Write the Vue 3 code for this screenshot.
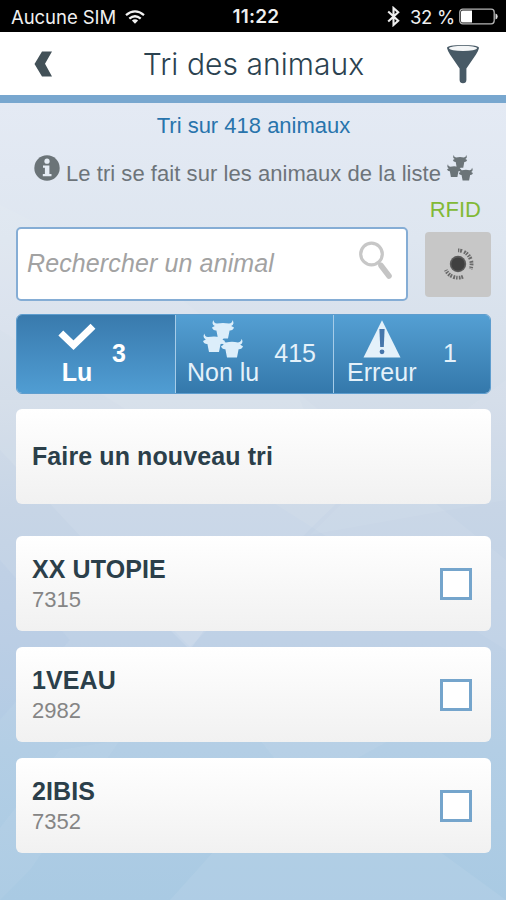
<script setup>
import { ref } from 'vue'

const query = ref('')
const active = ref('lu')
const tabs = [
  { id: 'lu', label: 'Lu', count: 3 },
  { id: 'nonlu', label: 'Non lu', count: 415 },
  { id: 'erreur', label: 'Erreur', count: 1 }
]
const animals = ref([
  { name: 'XX UTOPIE', number: '7315', checked: false },
  { name: '1VEAU', number: '2982', checked: false },
  { name: '2IBIS', number: '7352', checked: false }
])
</script>

<template>
  <div class="screen">
    <svg class="backdrop" viewBox="0 0 506 900" aria-hidden="true">
      <g fill="#fff">
        <path d="M0 205 L170 290 L506 560 V650 L0 330Z" opacity=".06" />
        <path d="M0 450 L80 536 L190 647 L340 500 L300 400 L0 400Z" opacity=".08" />
        <path d="M165 625 L190 650 L215 615Z" opacity=".12" />
        <path d="M310 535 L345 500 L506 380 V500Z" opacity=".05" />
        <path d="M260 740 L300 790 L390 740Z" opacity=".06" />
        <path d="M0 828 L60 750 L120 740 L30 870 L0 900Z" opacity=".05" />
        <path d="M170 900 L260 800 L410 830 L506 900Z" opacity=".07" />
      </g>
      <path d="M0 560 L70 640 L0 720Z" fill="#9fb6e0" opacity=".1" />
    </svg>

    <div class="statusbar">
      <div class="carrier">
        <span>Aucune SIM</span>
        <svg width="20" height="14" viewBox="0 0 20 14">
          <g fill="none" stroke="#f2f2f2" stroke-width="2.3">
            <path d="M1 5.2 Q10 -2.4 19 5.2" />
            <path d="M4.3 8.6 Q10 3.8 15.7 8.6" />
          </g>
          <path d="M10 13.8 L6.9 10.6 Q10 7.9 13.1 10.6Z" fill="#f2f2f2" />
        </svg>
      </div>
      <span class="clock">11:22</span>
      <div class="power">
        <svg width="13" height="21" viewBox="0 0 13 21">
          <path d="M1.2 5.6 L11.2 14.8 L6.5 19 V2 L11.2 6.2 L1.2 15.4" fill="none" stroke="#eee" stroke-width="2.1" />
        </svg>
        <span class="percent">32 %</span>
        <svg width="39" height="17" viewBox="0 0 39 17">
          <rect x=".8" y="1.2" width="34.4" height="14.6" rx="3" fill="none" stroke="#b5b5b5" stroke-width="1.3" />
          <path d="M3.5 2.5 H13 V14.5 H3.5 Q2 14.5 2 13 V4 Q2 2.5 3.5 2.5Z" fill="#fff" />
          <path d="M36.5 5.5 Q38.7 6.2 38.7 8.5 Q38.7 10.8 36.5 11.5Z" fill="#ddd" />
        </svg>
      </div>
    </div>

    <header class="header">
      <button class="icon-btn back" aria-label="Retour">
        <svg width="19" height="26" viewBox="0 0 19 26">
          <path d="M8 .5 H18 L11 12.8 L18 25.5 H8 L.5 13Z" fill="#435158" />
        </svg>
      </button>
      <h1>Tri des animaux</h1>
      <button class="icon-btn filter" aria-label="Filtrer">
        <svg width="34" height="40" viewBox="0 0 34 40">
          <path d="M1 4 Q1 1 17 1 Q33 1 33 4 Q32.5 6.5 30 10.5 L20.4 24.5 V36 Q20.2 39.3 17 39.3 Q13.8 39.3 13.6 36 V24.5 L4 10.5 Q1.5 6.5 1 4Z" fill="#485a66" />
          <ellipse cx="17" cy="4.3" rx="14" ry="2.6" fill="#f4f6f7" />
        </svg>
      </button>
    </header>

    <main class="content">
      <p class="summary">Tri sur 418 animaux</p>
      <p class="hint">
        <svg class="info" width="26" height="26" viewBox="0 0 26 26">
          <circle cx="13" cy="13" r="12.7" fill="#6b7478" />
          <circle cx="13" cy="6.2" r="2.6" fill="#e5ecf4" />
          <path d="M9 10.5 H15.4 V19 H17.5 V21.3 H8.8 V19 H10.9 V12.7 H9Z" fill="#e5ecf4" />
        </svg>
        <span>Le tri se fait sur les animaux de la liste</span>
        <svg class="herd" width="26" height="26" viewBox="0 0 40 38" preserveAspectRatio="none">
          <g fill="#6b7478">
            <path id="cow" d="M10.5 0 Q10.5 3 14 3.6 Q20 2.2 26 3.6 Q29.5 3 29.5 0 Q32 4 28.2 6 L31 7.4 Q30 10.6 26.6 10.4 L25 18.6 H15 L13.4 10.4 Q10 10.6 9 7.4 L11.8 6 Q8 4 10.5 0Z" />
            <use href="#cow" x="-9" y="13.5" />
            <use href="#cow" x="9" y="18.8" />
          </g>
        </svg>
      </p>
      <p class="rfid">RFID</p>

      <div class="search-row">
        <label class="search">
          <input v-model="query" type="text" placeholder="Rechercher un animal" />
          <svg width="34" height="40" viewBox="0 0 34 40">
            <circle cx="12.5" cy="13" r="10.8" fill="none" stroke="#c7c7c7" stroke-width="3.2" />
            <path d="M19.3 21.3 L22 24.2" stroke="#c7c7c7" stroke-width="3" />
            <path d="M22 24.5 L30 35" stroke="#c4c4c4" stroke-width="5.6" stroke-linecap="round" />
          </svg>
        </label>
        <button class="reader" aria-label="Lecteur RFID">
          <svg width="36" height="36" viewBox="0 0 36 36">
            <circle cx="18" cy="18" r="8.2" fill="#5b5b5b" />
            <circle cx="18" cy="18" r="6.6" fill="#404040" />
            <g fill="none" stroke="#6a6a6a" stroke-width="3.8">
              <path d="M18 4.4 A13.6 13.6 0 0 1 30.6 23" stroke-dasharray="1.4 .8 2 2 1.8 .8 1.6 1.4" />
              <path d="M23 30.8 A13.6 13.6 0 0 1 5.8 24" stroke-dasharray="1.8 .8 1.7 1.2 1.5 1 1.9 1.3" />
            </g>
          </svg>
        </button>
      </div>

      <nav class="tabs">
        <button v-for="tab in tabs" :key="tab.id" class="tab" :class="[tab.id, { active: active === tab.id }]" @click="active = tab.id">
          <span class="tab-main">
            <svg v-if="tab.id === 'lu'" width="38" height="38" viewBox="0 0 38 38">
              <path d="M2.8 13 L15.5 25.2 L35 6.2" fill="none" stroke="#fff" stroke-width="7" />
            </svg>
            <svg v-else-if="tab.id === 'nonlu'" width="40" height="38" viewBox="0 0 40 38">
              <g fill="#dceefa">
                <path id="bull" d="M10.5 0 Q10.5 3 14 3.6 Q20 2.2 26 3.6 Q29.5 3 29.5 0 Q32 4 28.2 6 L31 7.4 Q30 10.6 26.6 10.4 L25 18.6 H15 L13.4 10.4 Q10 10.6 9 7.4 L11.8 6 Q8 4 10.5 0Z" />
                <use href="#bull" x="-9" y="13.5" />
                <use href="#bull" x="9" y="18.8" />
              </g>
            </svg>
            <svg v-else width="38" height="38" viewBox="0 0 38 38">
              <path d="M19 .3 L37.5 37.5 H.5Z" fill="#e4f1fa" />
              <path d="M16.4 9 H21.6 L20.8 27 H17.2Z" fill="#4676ab" />
              <circle cx="19" cy="31.8" r="2.4" fill="#4676ab" />
            </svg>
            <span class="tab-label">{{ tab.label }}</span>
          </span>
          <span class="tab-count">{{ tab.count }}</span>
        </button>
      </nav>

      <button class="card restart">Faire un nouveau tri</button>

      <ul class="list">
        <li v-for="animal in animals" :key="animal.number" class="card">
          <div class="identity">
            <strong>{{ animal.name }}</strong>
            <span>{{ animal.number }}</span>
          </div>
          <input v-model="animal.checked" type="checkbox" class="check" :aria-label="animal.name" />
        </li>
      </ul>
    </main>
  </div>
</template>

<style>
body { margin: 0; }
</style>

<style scoped>
* { box-sizing: border-box; }
.screen {
  position: relative;
  width: 506px;
  height: 900px;
  overflow: hidden;
  font-family: "Liberation Sans", Arial, sans-serif;
  background: linear-gradient(180deg, #e4eaf4 103px, #dee6f0 240px, #d3dde9 400px, #c7d5e6 510px, #bfd1e6 640px, #b3cee5 750px, #a9cae3 900px);
}
.backdrop { position: absolute; left: 0; top: 0; width: 506px; height: 900px; }
.statusbar, .header, .content { position: relative; }
button { border: 0; padding: 0; margin: 0; font: inherit; background: none; }
p, h1, ul { margin: 0; padding: 0; }
svg { display: block; flex: none; }

.statusbar {
  display: grid;
  grid-template-columns: 1fr auto 1fr;
  align-items: center;
  height: 32px;
  padding: 1px 8px 0 11px;
  background: #000;
  color: #f0f0f0;
  font: 400 18.5px/30px Inter, sans-serif;
}
.carrier { display: flex; align-items: center; gap: 9px; }
.carrier span { letter-spacing: -.05px; }
.clock { font-weight: 600; font-size: 19px; padding-left: 3px; letter-spacing: .2px; }
.power { display: flex; align-items: center; justify-content: flex-end; }
.percent { margin: 0 4px 0 10px; white-space: nowrap; letter-spacing: -.25px; }

.header {
  display: flex;
  align-items: center;
  justify-content: space-between;
  height: 71px;
  padding: 0 26px 0 34px;
  background: #fff;
  border-bottom: 8px solid #78a7cf;
}
.header h1 { font: 350 30px/40px Inter, sans-serif; letter-spacing: .05px; color: #2b4250; padding-left: 8px; }

.content { padding: 0 15px 0 16px; }
.summary { padding: 10px 0 0; font-size: 22px; line-height: 26px; text-align: center; color: #2874ac; }
.hint { display: flex; align-items: flex-start; height: 48px; padding: 16px 0 0 18px; font-size: 22px; line-height: 26px; color: #6d747a; white-space: nowrap; }
.hint span { margin: 6px 6px 0 6px; letter-spacing: .05px; }
.rfid { padding: 10px 10px 0 0; font-size: 22px; line-height: 26px; text-align: right; color: #82b936; }

.search-row { display: flex; align-items: center; justify-content: space-between; height: 74px; margin-top: 4px; }
.search { display: flex; align-items: center; width: 392px; height: 74px; padding: 0 13px 6px 9px; border: 2px solid #85add5; border-radius: 5px; background: #fff; }
.search input { flex: 1; min-width: 0; height: 40px; margin-top: 5px; border: 0; padding: 0; outline: 0; background: none; font: italic 25px/30px "Liberation Sans", Arial, sans-serif; letter-spacing: .12px; color: #333; }
.search input::placeholder { color: #a2a2a2; opacity: 1; }
.reader { display: flex; align-items: center; justify-content: center; width: 66px; height: 65px; border-radius: 4px; background: #c7c7c7; }

.tabs { display: grid; grid-template-columns: 158px 158px 1fr; width: 475px; height: 80px; margin-top: 13px; border: 1px solid #5e9dce; border-radius: 6px; overflow: hidden; }
.tab { display: flex; justify-content: space-between; align-items: center; background: linear-gradient(#549fd3, #3478ab); color: #e4f1fa; font-size: 25px; line-height: 28px; }
.tab + .tab { border-left: 1.5px solid #a6cce8; }
.tab.active { background: linear-gradient(#397aad, #509dd3); color: #fff; font-weight: 700; }
.tab-main { display: flex; flex-direction: column; align-items: center; padding-bottom: 2px; }
.tab-label { height: 28px; }
.tab-count { padding-bottom: 2px; }
.lu { padding: 0 49px 0 41px; }
.nonlu { padding: 0 17px 0 11px; }
.erreur { padding: 0 33px 0 13px; }

.card { display: flex; align-items: center; justify-content: space-between; width: 475px; height: 95px; padding: 0 19px 0 16px; border-radius: 6px; background: linear-gradient(#fff, #f1f1f1); color: #2b3f4a; }
.restart { margin-top: 15px; font-size: 25px; font-weight: 700; letter-spacing: .1px; }
.list { display: flex; flex-direction: column; gap: 16px; margin-top: 32px; list-style: none; }
.identity { display: flex; flex-direction: column; padding-top: 1px; }
.identity strong { font-size: 25px; line-height: 30px; letter-spacing: .1px; }
.identity span { font-size: 22px; line-height: 31px; color: #858585; }
.check { appearance: none; width: 32px; height: 32px; margin: 0; border: 3px solid #75a5cc; background: #fff; }
</style>
